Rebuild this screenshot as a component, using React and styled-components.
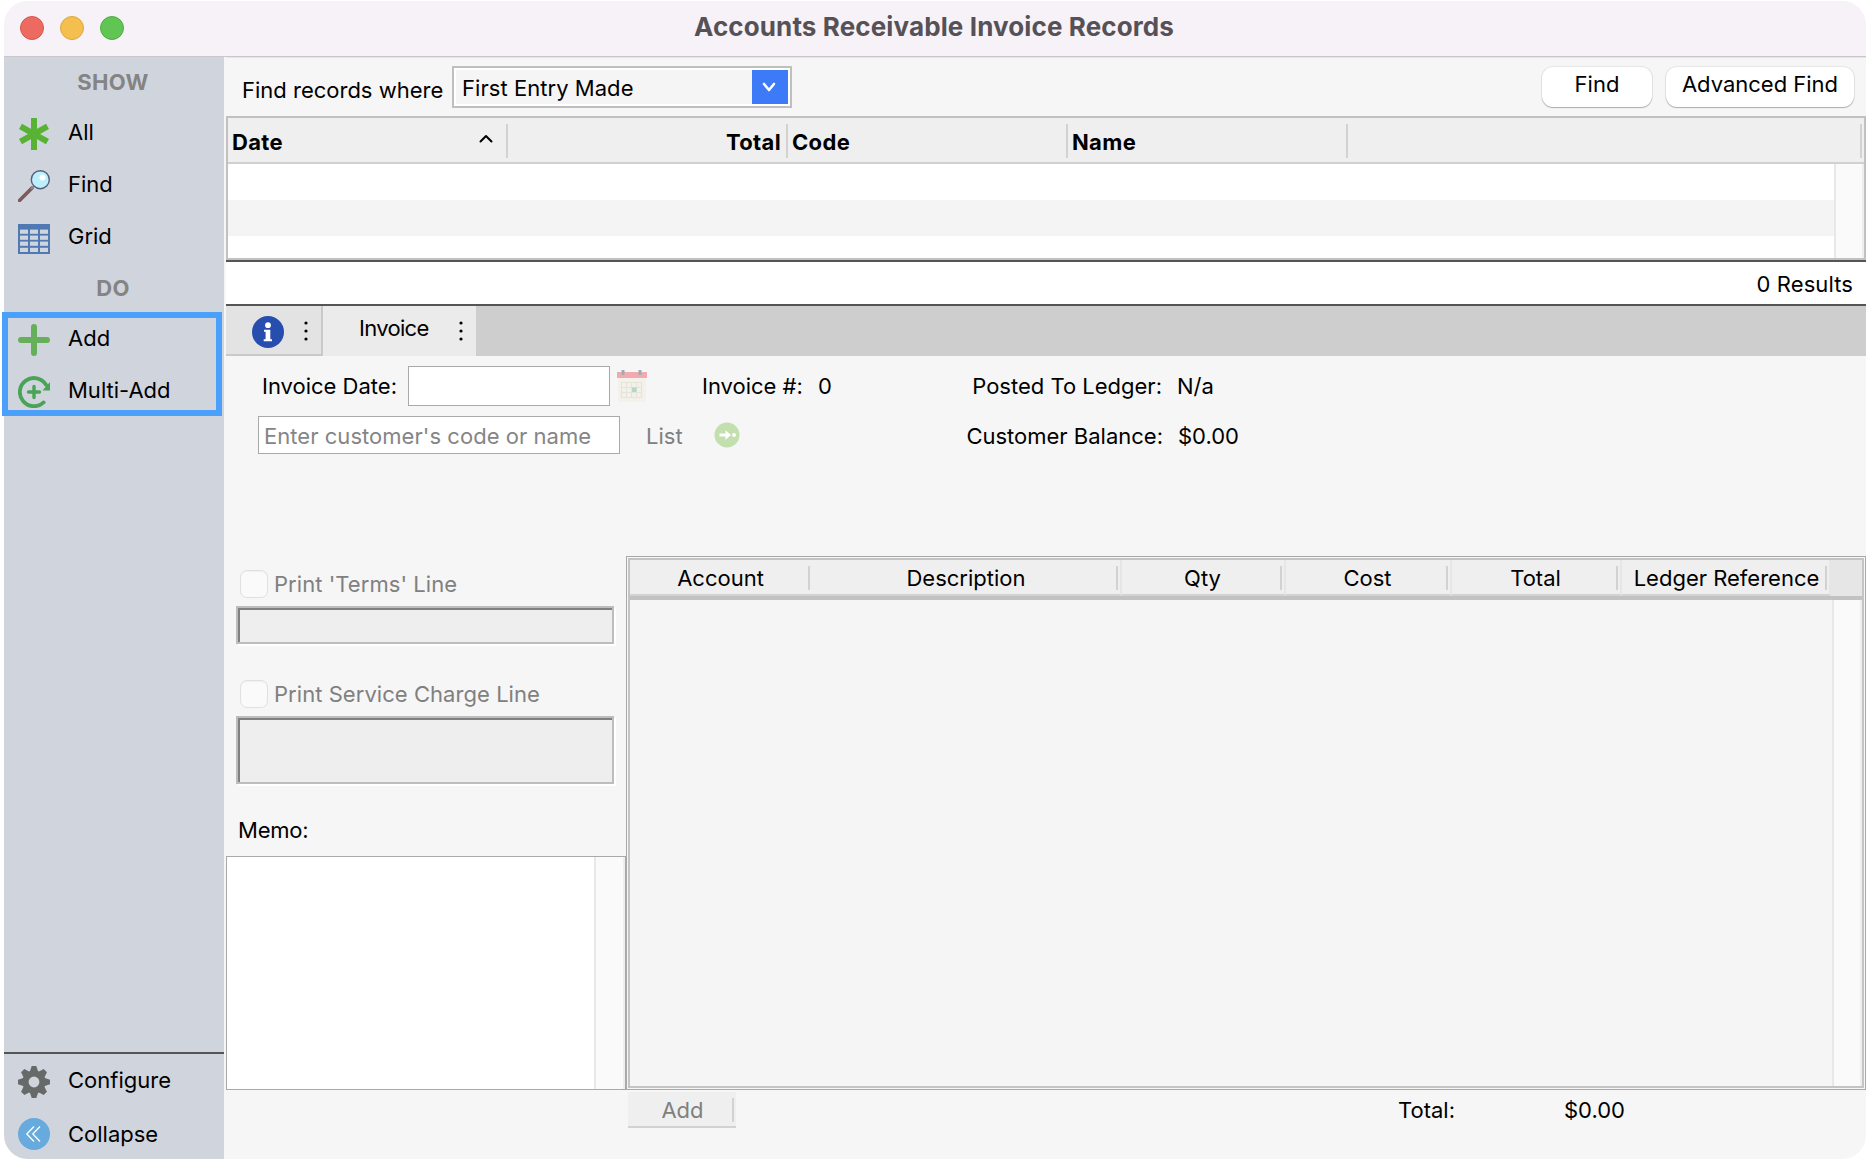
import React from 'react';
import styled, { createGlobalStyle } from 'styled-components';

const GlobalStyle = createGlobalStyle`
  * { box-sizing: border-box; }
  body { margin: 0; background: #fff; }
  button, input, textarea { font: inherit; letter-spacing: inherit; }
`;

const Window = styled.div`
  width: 1862px;
  height: 1158px;
  margin: 1px 0 1px 4px;
  border-radius: 24px;
  background: #f6f6f6;
  font-family: Inter, "Liberation Sans", sans-serif;
  font-size: 22px;
  line-height: 26px;
  color: #000;
  white-space: nowrap;
`;

const TitleBar = styled.header`
  display: grid;
  grid-template-columns: 220px 1422px 220px;
  height: 56px;
  padding-bottom: 1px;
  border-radius: 24px 24px 0 0;
  border-bottom: 1px solid #c9c7cc;
  background: #f7f2f8;
  align-items: center;
`;
const Lights = styled.div`
  display: flex;
  gap: 16px;
  padding-left: 16px;
`;
const Light = styled.span`
  width: 24px;
  height: 24px;
  border-radius: 50%;
  background: ${p => p.$fill};
  border: 1px solid ${p => p.$edge};
`;
const Title = styled.h1`
  margin: 0 0 3px -2px;
  text-align: center;
  font-size: 26px;
  font-weight: 700;
  color: #565157;
  letter-spacing: 0.12px;
`;

const Body = styled.div`
  display: flex;
  height: 1102px;
`;

/* sidebar */
const Sidebar = styled.nav`
  display: flex;
  flex-direction: column;
  width: 220px;
  background: #d0d5dd;
  border-radius: 0 0 0 24px;
`;
const Group = styled.div`
  height: ${p => p.$h}px;
  display: flex;
  align-items: center;
  justify-content: center;
  font-weight: 700;
  letter-spacing: 0.4px;
  color: #848484;
  padding-right: 2px;
`;
const Item = styled.div`
  display: flex;
  align-items: center;
  height: 52px;
  padding-left: 14px;
  gap: 18px;
  svg { margin-top: 4px; flex: none; }
`;
const Highlight = styled.div`
  width: 220px;
  height: 104px;
  margin: -2px 0 0 -2px;
  border: 6px solid #4aa0fa;
  ${Item} { padding-left: 10px; }
  ${Item}:first-child { margin-top: -6px; }
`;
const SideBottom = styled.div`
  margin-top: auto;
  height: 107px;
  border-top: 2px solid #555;
  ${Item}:last-child { height: 56px; }
  ${Item}:last-child svg { margin-top: 0; }
`;

/* main pane */
const Main = styled.main`
  display: flex;
  flex-direction: column;
  width: 1642px;
  padding-left: 2px;
`;
const T = styled.span`
  letter-spacing: ${p => p.$track || 0}px;
  color: ${p => (p.$dim ? '#808080' : '#000')};
`;
const SearchBar = styled.div`
  display: flex;
  height: 59px;
  padding: 9px 12px 8px 16px;
  box-shadow: inset 0 1px 0 #e6e6e6;
`;
const SearchLabel = styled(T)`
  width: 210px;
  padding-top: 11px;
`;
const Select = styled.div`
  display: flex;
  width: 340px;
  height: 42px;
  border: 2px solid #bfbfbf;
  padding: 2px;
  background: linear-gradient(#f5f5f5, #f5f5f5) content-box, #fff;
`;
const SelectText = styled(T)`
  flex: 1;
  padding: 5px 0 0 6px;
`;
const Arrow = styled.span`
  width: 36px;
  padding-right: 2px;
  background: #3d7af8;
  display: flex;
  align-items: center;
  justify-content: center;
`;
const Buttons = styled.div`
  display: flex;
  gap: 14px;
  margin-left: auto;
  padding-top: 1px;
`;
const Button = styled.button`
  width: ${p => p.$w}px;
  height: 40px;
  border: 0;
  border-radius: 11px;
  padding: 0 0 7px;
  background: #fff;
  color: #000;
  box-shadow: 0 0 1px 1px rgba(0, 0, 0, 0.07), 0 1px 1px rgba(0, 0, 0, 0.25);
`;

const Results = styled.section`
  height: 144px;
  border: 2px solid #c1c1c1;
  background: #fff;
`;
const HeadRow = styled.div`
  display: grid;
  grid-template-columns: 280px 280px 280px 280px 514px;
  height: 46px;
  padding-top: 6px;
  background: #efefef;
  border-bottom: 2px solid #d0d0d0;
`;
const Head = styled.div`
  display: flex;
  height: 34px;
  align-items: center;
  justify-content: ${p => (p.$right ? 'flex-end' : 'space-between')};
  padding: 1px 5px 0 4px;
  font-weight: 700;
  letter-spacing: 0.35px;
  border-right: 2px solid #d2d2d2;
  svg { margin: -5px 8px 0 0; }
`;
const ListBody = styled.div`
  display: flex;
  height: 94px;
`;
const Stripes = styled.div`
  flex: 1;
  background: repeating-linear-gradient(#fff 0 36px, #f4f4f4 36px 72px);
`;
const Scroll = styled.div`
  width: ${p => p.$w || 30}px;
  background: #fafafa;
  border-left: 2px solid #e8e8e8;
  border-right: 2px solid #eeeeee;
`;
const Count = styled.div`
  height: 46px;
  border-top: 2px solid #555;
  border-bottom: 2px solid #555;
  background: #fff;
  text-align: right;
  letter-spacing: 0.1px;
  padding: 9px 13px 0 0;
`;

const Tabs = styled.div`
  display: flex;
  height: 50px;
  background: #cecece;
`;
const InfoTab = styled.div`
  display: flex;
  align-items: center;
  width: 97px;
  padding: 4px 0 0 26px;
  gap: 20px;
  background: #e3e3e3;
  border-right: 2px solid #c9c9c9;
  border-bottom: 2px solid #c9c9c9;
  svg:last-child { margin-top: -2px; }
`;
const Tab = styled.div`
  display: flex;
  width: 153px;
  justify-content: space-between;
  align-items: center;
  padding: 0 13px 0 36px;
  background: #ebebeb;
  ${T} { margin-top: -6px; }
`;

const Form = styled.div`
  height: 200px;
  padding-top: 10px;
`;
const FormRow = styled.div`
  display: grid;
  grid-template-columns: ${p => p.$cols};
  align-items: center;
  height: ${p => p.$h}px;
  margin-bottom: 10px;
`;
const Right = styled(T)`
  text-align: right;
`;
const Value = styled(T)`
  padding-left: 15px;
`;
const Field = styled.input`
  height: ${p => p.$h}px;
  width: 100%;
  border: 1px solid #a9a9a9;
  padding: 2px 5px 0;
  background: #fff;
  outline: 0;
  letter-spacing: 0.04px;
  &::placeholder { color: #858585; opacity: 1; }
`;
const Drop = styled.div`
  display: contents;
  ${T}, ${Right}, ${Value} { margin-top: 2px; }
`;

const Detail = styled.div`
  display: flex;
  height: 534px;
`;
const Left = styled.div`
  width: 400px;
  padding-top: 14px;
`;
const Check = styled.label`
  display: flex;
  align-items: center;
  height: 28px;
  margin-left: 14px;
  gap: 6px;
`;
const Box = styled.span`
  width: 28px;
  height: 28px;
  border: 1px solid #e0e0e0;
  border-radius: 7px;
  background: #fafafa;
  box-shadow: inset 0 1px 1px rgba(0, 0, 0, 0.04);
`;
const Sunken = styled.div`
  width: 378px;
  height: ${p => p.$h}px;
  margin: 8px 0 ${p => p.$gap}px 10px;
  border: 2px solid #bdbdbd;
  background: #eee;
  box-shadow: inset 2px 2px 0 #808080, 2px 2px 0 #fff;
`;
const MemoLabel = styled(T)`
  display: block;
  margin-left: 12px;
`;
const Memo = styled.div`
  display: flex;
  justify-content: flex-end;
  width: 400px;
  height: 234px;
  margin-top: 13px;
  border: 1px solid #a9a9a9;
  background: #fff;
`;
const GridFrame = styled.div`
  width: 1240px;
  border: 1px solid #a9a9a9;
  padding: 1px;
`;
const Grid = styled.div`
  display: flex;
  flex-direction: column;
  height: 100%;
  border: 2px solid #c4c4c4;
  background: #f5f5f5;
`;
const GridHead = styled.div`
  display: grid;
  grid-template-columns: 183px 309px 164px 166px 170px 209px 1fr;
  height: 40px;
  border-bottom: 4px solid #c2c2c2;
  background: #e6e6e6;
`;
const GridCell = styled.div`
  display: flex;
  padding: 6px 2px 0 0;
  border-right: 2px solid #e6e6e6;
  border-bottom: 2px solid #d2d2d2;
  background: #efefef;
  line-height: 24px;
  &:first-child {
    border-right: 0;
    padding-right: 3px;
  }
  &:nth-child(6) span { padding-left: 6px; }
  span {
    flex: 1;
    height: 24px;
    text-align: center;
    border-right: 2px solid #d2d2d2;
    padding-left: 3px;
  }
`;
const GridBody = styled.div`
  display: flex;
  flex: 1;
  justify-content: flex-end;
`;

const Footer = styled.footer`
  display: grid;
  grid-template-columns: 402px 108px 662px 166px auto;
  padding-top: 2px;
  align-items: center;
  height: 38px;
`;
const AddButton = styled.button`
  grid-column: 2;
  height: 36px;
  padding: 6px 2px 4px 0;
  border: 0;
  border-bottom: 2px solid #d2d2d2;
  background: #efefef;
  color: #808080;
  display: flex;
  line-height: 24px;
  span {
    flex: 1;
    height: 24px;
    border-right: 2px solid #d2d2d2;
    padding-left: 5px;
  }
`;
const FootLabel = styled(T)`
  grid-column: 4;
`;

const Chevron = ({ up, color, w = 14, sw = 2 }) => (
  <svg width={w} height="10" viewBox="0 0 14 10" fill="none" stroke={color} strokeWidth={sw} strokeLinecap="round" strokeLinejoin="round">
    <path d={up ? 'M1.5 7.5L7 2l5.5 5.5' : 'M2 2l5 6 5-6'} />
  </svg>
);

const Dots = () => (
  <svg width="4" height="20" viewBox="0 0 4 20">
    <circle cx="2" cy="2" r="1.6" />
    <circle cx="2" cy="10" r="1.6" />
    <circle cx="2" cy="18" r="1.6" />
  </svg>
);

const AllIcon = () => (
  <svg width="32" height="32" viewBox="0 0 32 32" stroke="#58b334" strokeWidth="6">
    <path d="M16 0v32M2.5 8.3l27 15.4M29.5 8.3l-27 15.4" />
  </svg>
);

const FindIcon = () => (
  <svg width="32" height="32" viewBox="0 0 32 32">
    <path d="M1.5 30.5L14 18" stroke="#7d5a5c" strokeWidth="3.6" strokeLinecap="round" />
    <path d="M13 19l3-3" stroke="#9a8790" strokeWidth="2" />
    <circle cx="22.3" cy="9.7" r="9" fill="#bdeefc" stroke="#54607c" strokeWidth="1.4" />
    <circle cx="24.5" cy="7.5" r="3" fill="#fff" />
  </svg>
);

const GridIcon = () => (
  <svg width="32" height="32" viewBox="0 -2 32 32">
    <path fill="#5079b3" d="M0 0h32v30H0z" />
    {[5.6, 11.6, 17.6, 23.8].map(y =>
      [2, 12, 22].map(x => <rect key={x + '-' + y} x={x} y={y} width="8" height="4.2" fill="#d0d5dd" />)
    )}
  </svg>
);

const AddIcon = () => (
  <svg width="32" height="32" viewBox="0 0 32 32" stroke="#66b05c" strokeWidth="6" strokeLinecap="round">
    <path d="M16 3v26M3 16h26" />
  </svg>
);

const MultiIcon = () => (
  <svg width="32" height="32" viewBox="0 0 32 32" fill="none" stroke="#4aa356" strokeWidth="3.8" strokeLinecap="round">
    <path d="M25.6 26.4A14.1 14.1 0 1 1 28 8.8" />
    <path d="M16 10.5v11M10.500 16h11" strokeWidth="3.4" />
    <path d="M32 6v8.600h-7.500z" fill="#4aa356" stroke="none" />
  </svg>
);

const GearIcon = () => (
  <svg width="32" height="32" viewBox="0 0 32 32">
    <g fill="#666a69">
      {[0, 45, 90, 135].map(a => (
        <path key={a} d="M13.7 0h4.6l2 6v20l-2 6h-4.6l-2-6V6z" transform={`rotate(${a} 16 16)`} />
      ))}
      <circle cx="16" cy="16" r="11.5" />
    </g>
    <circle cx="16" cy="16" r="5.4" fill="#d0d5dd" />
  </svg>
);

const CollapseIcon = () => (
  <svg width="32" height="32" viewBox="0 0 32 32">
    <circle cx="16" cy="16" r="16" fill="#66aade" />
    <path d="M16 8.5L8.8 16l7.2 7.5M22 8.5L14.8 16l7.2 7.5" fill="none" stroke="#fff" strokeWidth="1.3" />
  </svg>
);

const InfoIcon = () => (
  <svg width="32" height="32" viewBox="0 0 32 32">
    <circle cx="16" cy="16" r="16" fill="#274eae" />
    <circle cx="16" cy="9.2" r="2.9" fill="#fff" />
    <path d="M12 13.7h6.3v9.5H20v2h-8.3v-2h1.9v-7.5H12z" fill="#fff" />
  </svg>
);

const CalendarIcon = () => (
  <svg width="30" height="32" viewBox="0 0 30 32">
    <path fill="#f3f1ea" d="M1 8h28v24H1z" />
    <path fill="#f0aab0" d="M0 2h30v6H0z" />
    <path fill="#a3abb2" d="M4.5 0h3v5h-3zM21.5 0h3v5h-3z" />
    <path d="M4.5 12.5h20v15h-20zM4.5 17.5h20M4.5 22.5h20M9.5 12.5v15M14.5 12.5v15M19.5 12.5v15" fill="none" stroke="#e4e4d8" strokeWidth="1.2" />
    <path fill="#b2d8c8" d="M15 17.5h4.5v4.5H15z" />
  </svg>
);

const GoIcon = () => (
  <svg width="26" height="26" viewBox="0 0 26 26">
    <circle cx="13" cy="13" r="12.5" fill="#c4dfae" />
    <path d="M5.5 11.5h6V8.2l5.5 4.8-5.5 4.8v-3.3h-6z" fill="#fff" />
    <circle cx="20" cy="13" r="2" fill="#fff" />
  </svg>
);

const columns = ['Account', 'Description', 'Qty', 'Cost', 'Total', 'Ledger Reference'];

function SideNav() {
  return (
    <Sidebar>
      <Group $h={49}>SHOW</Group>
      <Item><AllIcon />All</Item>
      <Item><FindIcon />Find</Item>
      <Item><GridIcon />Grid</Item>
      <Group $h={52}>DO</Group>
      <Highlight>
        <Item><AddIcon />Add</Item>
        <Item><MultiIcon />Multi-Add</Item>
      </Highlight>
      <SideBottom>
        <Item><GearIcon />Configure</Item>
        <Item><CollapseIcon />Collapse</Item>
      </SideBottom>
    </Sidebar>
  );
}

function ResultList() {
  return (
    <Results>
      <HeadRow>
        <Head>Date <Chevron up color="#000" /></Head>
        <Head $right>Total</Head>
        <Head>Code</Head>
        <Head>Name</Head>
        <Head />
      </HeadRow>
      <ListBody>
        <Stripes />
        <Scroll />
      </ListBody>
    </Results>
  );
}

function InvoiceForm() {
  return (
    <Form>
      <FormRow $h={40} $cols="171px 11px 202px 7px 85px 116px 144px 200px auto">
        <Right>Invoice Date:</Right>
        <i />
        <Field $h={40} />
        <i />
        <CalendarIcon />
        <T>Invoice #:</T>
        <T>0</T>
        <Right>Posted To Ledger:</Right>
        <Value>N/a</Value>
      </FormRow>
      <FormRow $h={38} $cols="32px 362px 26px 68px 249px 200px auto">
        <Drop>
          <i />
          <Field $h={38} placeholder="Enter customer's code or name" />
          <i />
          <T $dim>List</T>
          <GoIcon />
          <Right>Customer Balance:</Right>
          <Value>$0.00</Value>
        </Drop>
      </FormRow>
    </Form>
  );
}

export default function App() {
  return (
    <>
      <GlobalStyle />
      <Window>
        <TitleBar>
          <Lights>
            <Light $fill="#ec6a5f" $edge="#d35850" />
            <Light $fill="#f5bf4f" $edge="#dba73f" />
            <Light $fill="#61c554" $edge="#52ad46" />
          </Lights>
          <Title>Accounts Receivable Invoice Records</Title>
        </TitleBar>
        <Body>
          <SideNav />
          <Main>
            <SearchBar>
              <SearchLabel>Find records where</SearchLabel>
              <Select>
                <SelectText $track={0.05}>First Entry Made</SelectText>
                <Arrow><Chevron color="#fff" w={16} sw={2.6} /></Arrow>
              </Select>
              <Buttons>
                <Button $w={110}>Find</Button>
                <Button $w={188}>Advanced Find</Button>
              </Buttons>
            </SearchBar>
            <ResultList />
            <Count>0 Results</Count>
            <Tabs>
              <InfoTab><InfoIcon /><Dots /></InfoTab>
              <Tab><T $track={-0.7}>Invoice</T><Dots /></Tab>
            </Tabs>
            <InvoiceForm />
            <Detail>
              <Left>
                <Check><Box /><T $dim $track={0.05}>Print 'Terms' Line</T></Check>
                <Sunken $h={38} $gap={36} />
                <Check><Box /><T $dim $track={0.05}>Print Service Charge Line</T></Check>
                <Sunken $h={68} $gap={33} />
                <MemoLabel $track={-0.2}>Memo:</MemoLabel>
                <Memo><Scroll $w={31} /></Memo>
              </Left>
              <GridFrame>
                <Grid>
                  <GridHead>
                    {columns.map(c => <GridCell key={c}><span>{c}</span></GridCell>)}
                  </GridHead>
                  <GridBody><Scroll /></GridBody>
                </Grid>
              </GridFrame>
            </Detail>
            <Footer>
              <AddButton><span>Add</span></AddButton>
              <FootLabel>Total:</FootLabel>
              <T>$0.00</T>
            </Footer>
          </Main>
        </Body>
      </Window>
    </>
  );
}
